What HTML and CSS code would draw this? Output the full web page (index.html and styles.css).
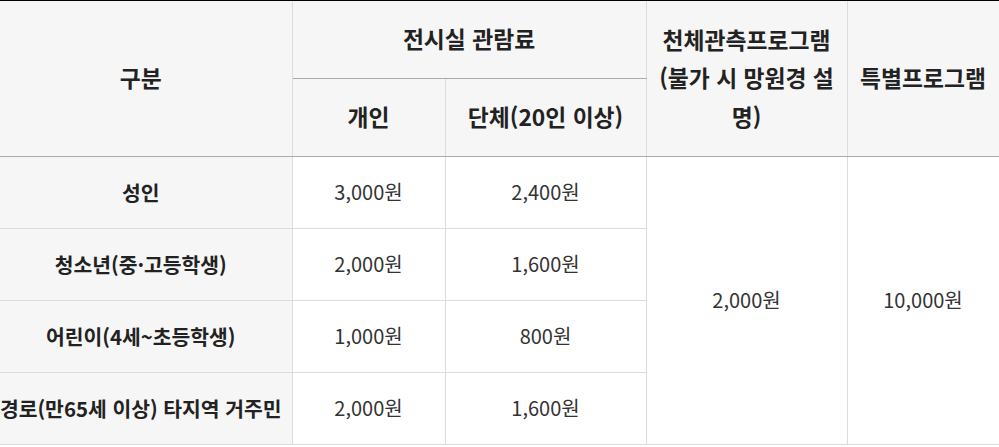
FILE: index.html
```html
<!DOCTYPE html>
<html lang="ko">
<head>
<meta charset="utf-8">
<link rel="stylesheet" href="styles.css">
</head>
<body>
<div class="wrap">
<table class="fee">
  <colgroup>
    <col class="c1"><col class="c2"><col class="c3"><col class="c4"><col class="c5">
  </colgroup>
  <thead>
    <tr class="h1">
      <th rowspan="2" class="first">구분</th>
      <th colspan="2" class="group">전시실 관람료</th>
      <th rowspan="2">천체관측프로그램 (불가 시 망원경 설명)</th>
      <th rowspan="2">특별프로그램</th>
    </tr>
    <tr class="h2">
      <th>개인</th>
      <th>단체(20인 이상)</th>
    </tr>
  </thead>
  <tbody>
    <tr>
      <th class="label first">성인</th>
      <td>3,000원</td>
      <td>2,400원</td>
      <td rowspan="4">2,000원</td>
      <td rowspan="4">10,000원</td>
    </tr>
    <tr>
      <th class="label first">청소년(중·고등학생)</th>
      <td>2,000원</td>
      <td>1,600원</td>
    </tr>
    <tr>
      <th class="label first">어린이(4세~초등학생)</th>
      <td>1,000원</td>
      <td>800원</td>
    </tr>
    <tr>
      <th class="label first">경로(만65세 이상) 타지역 거주민</th>
      <td>2,000원</td>
      <td>1,600원</td>
    </tr>
  </tbody>
</table>
</div>
</body>
</html>
```

FILE: styles.css
```css
html, body {
  margin: 0;
  padding: 0;
  background: #fff;
  overflow: hidden;
}

.wrap {
  margin-left: -10px;
  width: 1009px;
  border-top: 1px solid #000;
}

.fee {
  width: 1009px;
  border-collapse: collapse;
  table-layout: fixed;
  font-family: "Noto Sans CJK KR", "Noto Sans", sans-serif;
  color: #222;
}

.c1 { width: 302px; }
.c2 { width: 153px; }
.c3 { width: 201px; }
.c4 { width: 201px; }
.c5 { width: 152px; }

.fee th,
.fee td {
  padding: 0 7px;
  text-align: center;
  vertical-align: middle;
  border-left: 1px solid #dcdcdc;
  border-right: 1px solid #dcdcdc;
}

.fee th.first { border-left: none; }

.fee thead th {
  background: #f6f6f6;
  font-size: 22.8px;
  font-weight: 700;
  line-height: 38.5px;
  border-bottom: 1px solid #aaa;
}

.fee .h1 { height: 77px; }
.fee .h2 { height: 78px; }

.fee .group { border-bottom: 1px solid #aaa; }

.fee tbody tr { height: 72px; }

.fee tbody th,
.fee tbody td {
  border-bottom: 1px solid #dcdcdc;
  font-size: 20px;
  line-height: 28px;
}

.fee tbody th.label {
  background: #f6f6f6;
  font-size: 20.4px;
  font-weight: 700;
  white-space: nowrap;
}

.fee tbody td {
  font-weight: 400;
  color: #333;
}
```
